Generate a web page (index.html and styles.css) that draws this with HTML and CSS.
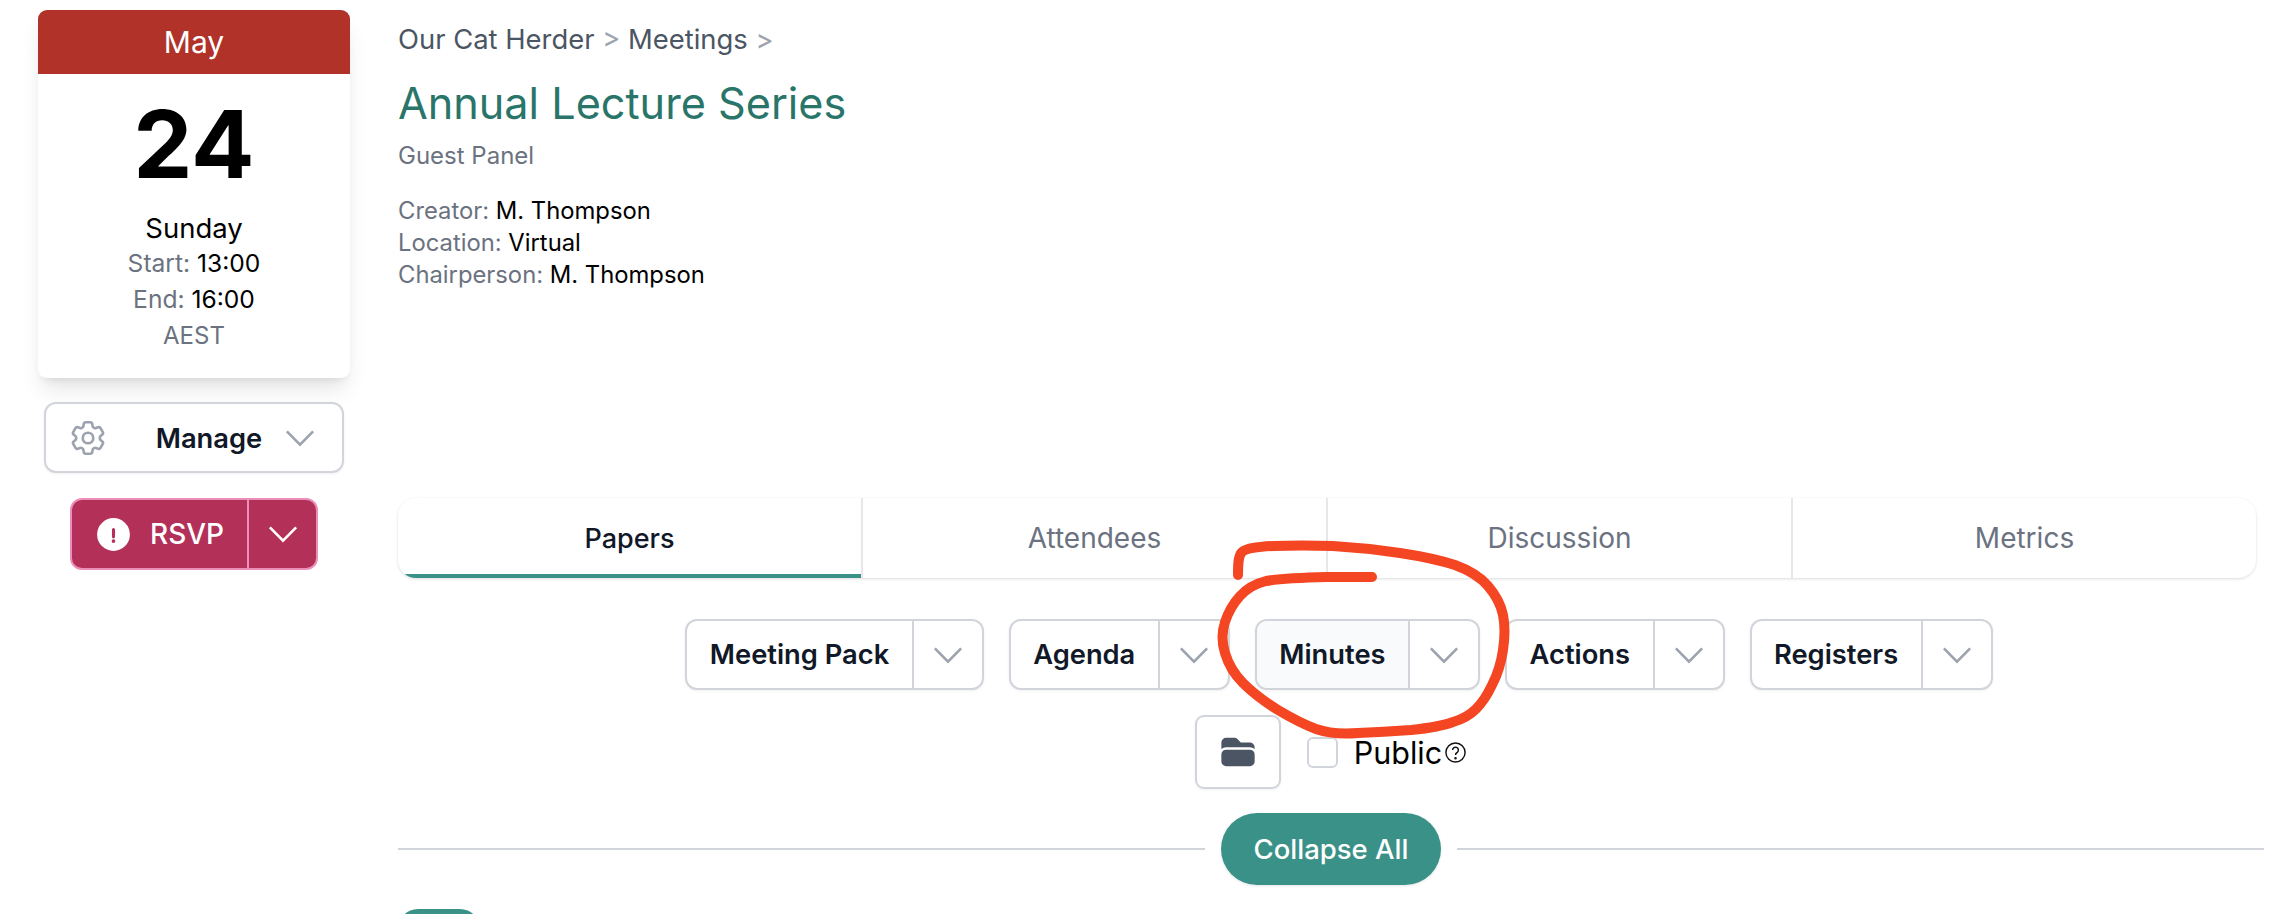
FILE: index.html
```html
<!DOCTYPE html>
<html lang="en">
<head>
    <meta charset="UTF-8">
    <title>Annual Lecture Series - Our Cat Herder</title>
    <link rel="stylesheet" href="styles.css">
</head>
<body>
    <div class="page">
        <aside class="sidebar">
            <div class="calendar">
                <div class="calendar-month">May</div>
                <div class="calendar-day">24</div>
                <div class="calendar-weekday">Sunday</div>
                <div class="calendar-row"><span class="muted">Start:</span> 13:00</div>
                <div class="calendar-row"><span class="muted">End:</span> 16:00</div>
                <div class="calendar-zone muted">AEST</div>
            </div>
            <button class="manage-btn">
                <svg class="gear" viewBox="0 0 24 24" fill="none" stroke="#9ca3af" stroke-width="1.5">
                    <path d="M9.594 3.94c.09-.542.56-.94 1.11-.94h2.593c.55 0 1.02.398 1.11.94l.213 1.281c.063.374.313.686.645.87.074.04.147.083.22.127.325.196.72.257 1.075.124l1.217-.456a1.125 1.125 0 011.37.49l1.296 2.247a1.125 1.125 0 01-.26 1.431l-1.003.827c-.293.24-.438.613-.431.992a6.759 6.759 0 010 .255c-.007.378.138.75.43.99l1.005.828c.424.35.534.954.26 1.43l-1.298 2.247a1.125 1.125 0 01-1.369.491l-1.217-.456c-.355-.133-.75-.072-1.076.124a6.57 6.57 0 01-.22.128c-.331.183-.581.495-.644.869l-.213 1.28c-.09.543-.56.941-1.11.941h-2.594c-.55 0-1.02-.398-1.11-.94l-.213-1.281c-.062-.374-.312-.686-.644-.87a6.52 6.52 0 01-.22-.127c-.325-.196-.72-.257-1.076-.124l-1.217.456a1.125 1.125 0 01-1.369-.49l-1.297-2.247a1.125 1.125 0 01.26-1.431l1.004-.827c.292-.24.437-.613.43-.992a6.932 6.932 0 010-.255c.007-.378-.138-.75-.43-.99l-1.004-.828a1.125 1.125 0 01-.26-1.43l1.297-2.247a1.125 1.125 0 011.37-.491l1.216.456c.356.133.751.072 1.076-.124.072-.044.146-.087.22-.128.332-.183.582-.495.644-.869l.214-1.281z"/>
                    <circle cx="12" cy="12" r="3"/>
                </svg>
                <span class="manage-label">Manage</span>
                <svg class="chevron" viewBox="0 0 24 24" fill="none" stroke="currentColor" stroke-width="1.5"><path d="M19.5 8.25l-7.5 7.5-7.5-7.5"/></svg>
            </button>
            <div class="rsvp">
                <button class="rsvp-main">
                    <svg class="alert" viewBox="0 0 20 20" fill="#fff"><path fill-rule="evenodd" d="M18 10a8 8 0 1 1-16 0 8 8 0 0 1 16 0Zm-8-3.2a.75.75 0 0 1 .75.75v3.6a.75.75 0 0 1-1.5 0v-3.6a.75.75 0 0 1 .75-.75Zm0 7.3a.9.9 0 1 0 0-1.8.9.9 0 0 0 0 1.8Z"/></svg>
                    RSVP
                </button>
                <button class="rsvp-toggle">
                    <svg class="chevron" viewBox="0 0 24 24" fill="none" stroke="currentColor" stroke-width="1.5"><path d="M19.5 8.25l-7.5 7.5-7.5-7.5"/></svg>
                </button>
            </div>
        </aside>

        <main class="content">
            <div class="breadcrumb">Our Cat Herder <span class="sep">&gt;</span> Meetings <span class="sep">&gt;</span></div>
            <h1>Annual Lecture Series</h1>
            <div class="subtitle">Guest Panel</div>
            <div class="details">
                <div><span class="muted">Creator:</span> M. Thompson</div>
                <div><span class="muted">Location:</span> Virtual</div>
                <div><span class="muted">Chairperson:</span> M. Thompson</div>
            </div>

            <nav class="tabs">
                <a class="tab active">Papers</a>
                <a class="tab">Attendees</a>
                <a class="tab">Discussion</a>
                <a class="tab">Metrics</a>
            </nav>

            <div class="btn-groups">
                <div class="btn-group"><span class="btn-label">Meeting Pack</span><span class="btn-arrow"><svg class="chevron" viewBox="0 0 24 24" fill="none" stroke="currentColor" stroke-width="1.5"><path d="M19.5 8.25l-7.5 7.5-7.5-7.5"/></svg></span></div>
                <div class="btn-group"><span class="btn-label">Agenda</span><span class="btn-arrow"><svg class="chevron" viewBox="0 0 24 24" fill="none" stroke="currentColor" stroke-width="1.5"><path d="M19.5 8.25l-7.5 7.5-7.5-7.5"/></svg></span></div>
                <div class="btn-group hovered"><span class="btn-label">Minutes</span><span class="btn-arrow"><svg class="chevron" viewBox="0 0 24 24" fill="none" stroke="currentColor" stroke-width="1.5"><path d="M19.5 8.25l-7.5 7.5-7.5-7.5"/></svg></span></div>
                <div class="btn-group"><span class="btn-label">Actions</span><span class="btn-arrow"><svg class="chevron" viewBox="0 0 24 24" fill="none" stroke="currentColor" stroke-width="1.5"><path d="M19.5 8.25l-7.5 7.5-7.5-7.5"/></svg></span></div>
                <div class="btn-group"><span class="btn-label">Registers</span><span class="btn-arrow"><svg class="chevron" viewBox="0 0 24 24" fill="none" stroke="currentColor" stroke-width="1.5"><path d="M19.5 8.25l-7.5 7.5-7.5-7.5"/></svg></span></div>
            </div>

            <div class="file-row">
                <button class="folder-btn">
                    <svg viewBox="0 0 24 24" fill="#4b5563"><path d="M19.5 21a3 3 0 003-3v-4.5a3 3 0 00-3-3h-15a3 3 0 00-3 3V18a3 3 0 003 3h15zM1.5 10.146V6a3 3 0 013-3h5.379a2.25 2.25 0 011.59.659l2.122 2.121c.14.141.331.22.53.22H19.5a3 3 0 013 3v1.146A4.483 4.483 0 0019.5 9h-15a4.483 4.483 0 00-3 1.146z"/></svg>
                </button>
                <label class="public">
                    <span class="checkbox"></span>
                    <span>Public</span>
                    <svg class="help" viewBox="0 0 24 24" fill="none" stroke="#111" stroke-width="1.5"><circle cx="12" cy="12" r="10"/><path d="M9 9.5a3 3 0 115 2.2c-1 .9-2 1.4-2 2.8"/><circle cx="12" cy="18" r=".6"/></svg>
                </label>
            </div>

            <div class="divider">
                <span class="divider-line"></span>
                <button class="collapse-btn">Collapse All</button>
                <span class="divider-line"></span>
            </div>

            <div class="next-pill"></div>
        </main>
    </div>

    <!-- hand drawn circle over the screenshot -->
    <svg class="scribble" viewBox="0 0 2276 914" fill="none">
        <path d="M1238 575C1238 565 1238 556 1242 552Q1248 547 1274 546Q1300 545 1333 546Q1367 548 1400 553Q1433 558 1455 565Q1477 573 1488 586Q1500 600 1503 615Q1506 630 1503 650Q1500 670 1492 685Q1485 700 1476 709Q1467 718 1453 722Q1440 727 1411 730Q1383 732 1358 733Q1333 735 1316 729Q1300 723 1278 710Q1257 697 1243 683Q1230 670 1225 653Q1220 637 1225 622Q1230 607 1240 596Q1250 585 1266 581Q1283 578 1327 577L1372 577" stroke="#f44623" stroke-width="10" stroke-linecap="round" stroke-linejoin="round"/>
    </svg>
</body>
</html>
```

FILE: styles.css
```css
* {
    box-sizing: border-box;
}
body {
    margin: 0;
    height: 914px;
    overflow: hidden;
    background: #fff;
    color: #000;
    font-family: Inter, 'Liberation Sans', sans-serif;
    font-size: 24px;
}
button {
    font-family: inherit;
    cursor: pointer;
}
.muted {
    color: #6b7280;
}
.page {
    display: flex;
    padding: 10px 12px 0 38px;
    gap: 48px;
}

/* sidebar */
.sidebar {
    width: 312px;
    flex: none;
    display: flex;
    flex-direction: column;
    align-items: center;
}
.calendar {
    width: 100%;
    height: 368px;
    border-radius: 9px;
    text-align: center;
    background: #fff;
    overflow: hidden;
    box-shadow: 0 15px 22px -4px rgba(0, 0, 0, 0.1), 0 6px 9px -5px rgba(0, 0, 0, 0.1);
}
.calendar-month {
    height: 64px;
    line-height: 64px;
    background: #b03228;
    color: #fff;
    font-size: 30px;
}
.calendar-day {
    font-size: 94px;
    font-weight: 700;
    line-height: 96px;
    margin-top: 22px;
}
.calendar-weekday {
    font-size: 27.5px;
    line-height: 34px;
    margin-top: 19px;
}
.calendar-row {
    font-size: 24.6px;
    line-height: 36px;
}
.calendar-zone {
    font-size: 24px;
    line-height: 36px;
    margin-top: 1px;
}
.manage-btn {
    width: 300px;
    height: 71px;
    margin-top: 24px;
    display: flex;
    align-items: center;
    padding: 0 21px;
    background: #fff;
    border: 2px solid #d1d5db;
    border-radius: 12px;
    box-shadow: 0 1px 3px rgba(0, 0, 0, 0.06);
}
.gear {
    width: 42px;
    height: 42px;
    flex: none;
}
.manage-label {
    flex: 1;
    text-align: center;
    font-size: 27.3px;
    font-weight: 600;
    color: #111827;
    padding: 2px 0 0 30px;
}
.chevron {
    width: 42px;
    height: 42px;
    color: #9ca3af;
    flex: none;
}
.rsvp {
    display: flex;
    width: 248px;
    height: 72px;
    margin-top: 25px;
    border: 2px solid #ec8fb8;
    border-radius: 12px;
    overflow: hidden;
    background: #b33159;
}
.rsvp-main {
    width: 177px;
    display: flex;
    align-items: center;
    gap: 16px;
    padding: 0 0 0 21px;
    background: none;
    border: none;
    border-right: 2px solid #ec8fb8;
    color: #fff;
    font-size: 28px;
    font-weight: 500;
}
.rsvp-toggle {
    flex: 1;
    display: flex;
    align-items: center;
    justify-content: center;
    padding: 0;
    background: none;
    border: none;
}
.rsvp-toggle .chevron {
    color: #fff;
}
.alert {
    width: 41px;
    height: 41px;
    flex: none;
}

/* main column */
.content {
    flex: 1;
    min-width: 0;
}
.breadcrumb {
    font-size: 27.4px;
    line-height: 36px;
    color: #4b5563;
    margin-top: 11px;
}
.sep {
    color: #9ca3af;
}
h1 {
    margin: 16px 0 0;
    font-size: 43.2px;
    font-weight: 400;
    line-height: 60px;
    color: #2a7569;
}
.subtitle {
    font-size: 24px;
    line-height: 32px;
    color: #6b7280;
    margin-top: 7px;
}
.details {
    font-size: 23.8px;
    line-height: 32px;
    margin-top: 23px;
}
.tabs {
    display: flex;
    width: 1858px;
    height: 80px;
    margin-top: 207px;
    border-radius: 18px;
    background: #fff;
    overflow: hidden;
    box-shadow: 0 1px 3px rgba(0, 0, 0, 0.14);
}
.tab {
    flex: 1;
    display: flex;
    align-items: center;
    justify-content: center;
    font-size: 28px;
    color: #6b7280;
    border-left: 2px solid #e5e7eb;
}
.tab:first-child {
    border-left: none;
}
.tab.active {
    color: #111827;
    font-size: 27px;
    font-weight: 500;
    border-bottom: 4px solid #3a9188;
    padding-top: 4px;
}
.btn-groups {
    display: flex;
    justify-content: center;
    gap: 25px;
    margin-top: 41px;
    padding-left: 16px;
}
.btn-group {
    display: flex;
    height: 71px;
    background: #fff;
    border: 2px solid #d1d5db;
    border-radius: 12px;
    overflow: hidden;
    box-shadow: 0 1px 3px rgba(0, 0, 0, 0.06);
}
.btn-label {
    display: flex;
    align-items: center;
    padding: 0 22.5px;
    font-size: 27.3px;
    font-weight: 600;
    color: #111827;
    border-right: 2px solid #d1d5db;
}
.btn-group.hovered .btn-label {
    background: #f9fafb;
}
.btn-arrow {
    display: flex;
    align-items: center;
    padding: 0 13px;
}
.file-row {
    display: flex;
    align-items: center;
    justify-content: center;
    gap: 26px;
    margin-top: 25px;
}
.folder-btn {
    display: flex;
    align-items: center;
    justify-content: center;
    width: 86px;
    height: 74px;
    padding: 0;
    background: #fff;
    border: 2px solid #d1d5db;
    border-radius: 9px;
    box-shadow: 0 1px 3px rgba(0, 0, 0, 0.06);
}
.folder-btn svg {
    width: 38px;
    height: 38px;
}
.public {
    display: flex;
    align-items: center;
    font-size: 30.5px;
    color: #000;
}
.checkbox {
    width: 31px;
    height: 31px;
    margin-right: 16px;
    border: 2px solid #d1d5db;
    border-radius: 6px;
}
.help {
    width: 23px;
    height: 23px;
    margin-left: 2px;
}
.divider {
    display: flex;
    align-items: center;
    gap: 16px;
    margin-top: 24px;
}
.divider-line {
    flex: 1;
    height: 2px;
    background: #d1d5db;
}
.collapse-btn {
    width: 220px;
    height: 72px;
    background: #3a9188;
    border: none;
    border-radius: 36px;
    color: #fff;
    font-size: 27.5px;
    font-weight: 500;
    box-shadow: 0 1px 3px rgba(0, 0, 0, 0.1);
}
.next-pill {
    width: 82px;
    height: 40px;
    margin-top: 24px;
    border-radius: 20px;
    background: #3a9188;
}

/* annotation drawn over the page */
.scribble {
    position: absolute;
    left: 0;
    top: 0;
    width: 2276px;
    height: 914px;
    pointer-events: none;
}
```
